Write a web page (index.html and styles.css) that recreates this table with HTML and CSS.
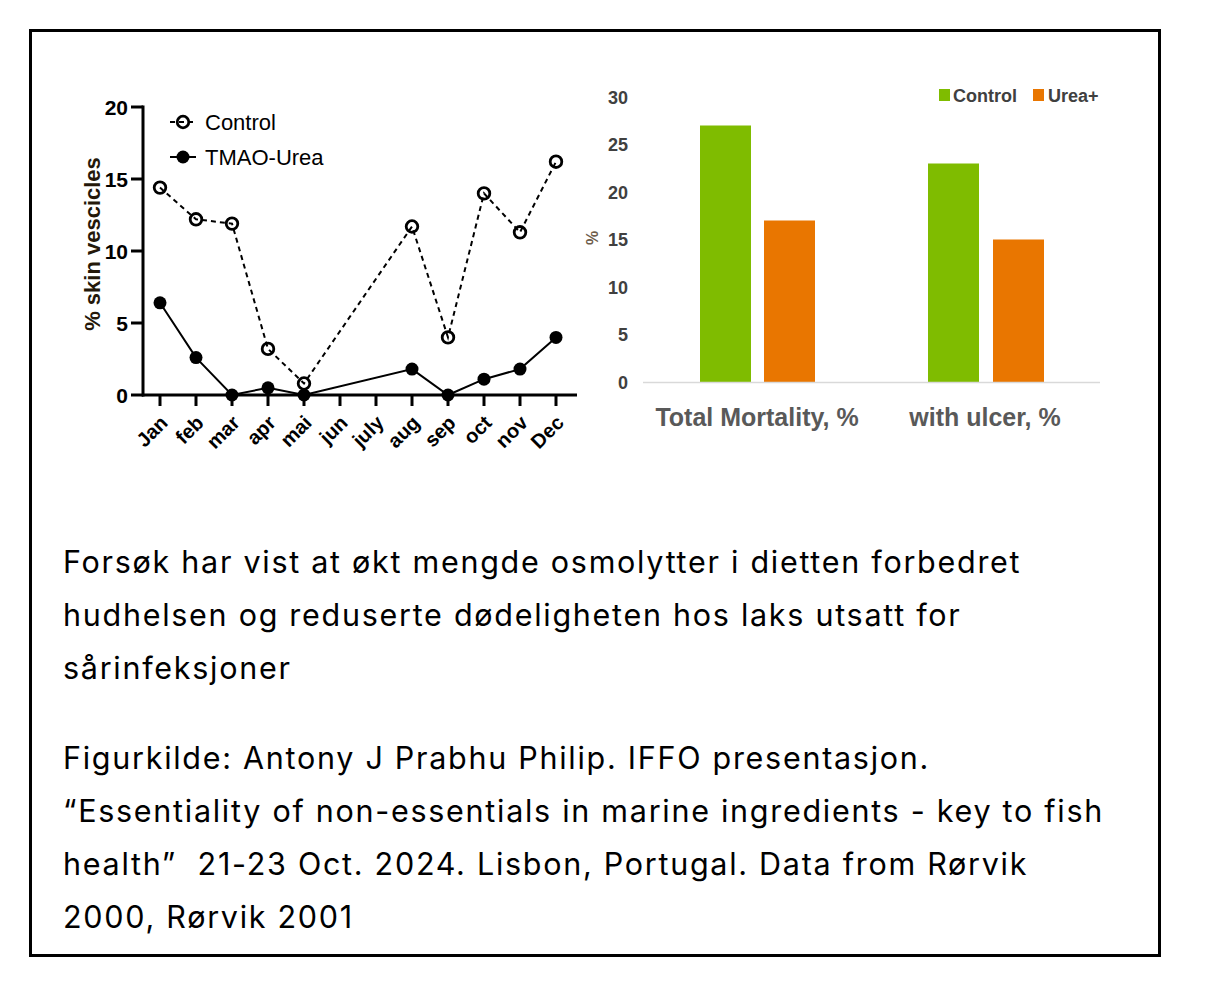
FILE: index.html
```html
<!DOCTYPE html>
<html lang="no">
<head>
<meta charset="utf-8">
<title>Osmolytter og hudhelse</title>
<link rel="stylesheet" href="styles.css">
</head>
<body>
<div class="frame">
  <div class="charts">
    <svg class="line-chart" width="522" height="390" viewBox="0 0 522 390">
      <text class="ytitle" transform="translate(37,174) rotate(-90)" text-anchor="middle">% skin vescicles</text>
      <g class="axis">
        <line x1="80" y1="35.5" x2="80" y2="326.5"/>
        <line x1="79" y1="325" x2="514" y2="325"/>
        <line x1="68" y1="37" x2="80" y2="37"/>
        <line x1="68" y1="109" x2="80" y2="109"/>
        <line x1="68" y1="181" x2="80" y2="181"/>
        <line x1="68" y1="253" x2="80" y2="253"/>
        <line x1="68" y1="325" x2="80" y2="325"/>
        <line x1="97" y1="325" x2="97" y2="336"/>
        <line x1="133" y1="325" x2="133" y2="336"/>
        <line x1="169" y1="325" x2="169" y2="336"/>
        <line x1="205" y1="325" x2="205" y2="336"/>
        <line x1="241" y1="325" x2="241" y2="336"/>
        <line x1="277" y1="325" x2="277" y2="336"/>
        <line x1="313" y1="325" x2="313" y2="336"/>
        <line x1="349" y1="325" x2="349" y2="336"/>
        <line x1="385" y1="325" x2="385" y2="336"/>
        <line x1="421" y1="325" x2="421" y2="336"/>
        <line x1="457" y1="325" x2="457" y2="336"/>
        <line x1="493" y1="325" x2="493" y2="336"/>
      </g>
      <g class="ylabels" text-anchor="end">
        <text x="65" y="45">20</text>
        <text x="65" y="117">15</text>
        <text x="65" y="189">10</text>
        <text x="65" y="261">5</text>
        <text x="65" y="333">0</text>
      </g>
      <g class="xlabels" text-anchor="end">
        <text transform="translate(106,354) rotate(-45)">Jan</text>
        <text transform="translate(142,354) rotate(-45)">feb</text>
        <text transform="translate(178,354) rotate(-45)">mar</text>
        <text transform="translate(214,354) rotate(-45)">apr</text>
        <text transform="translate(250,354) rotate(-45)">mai</text>
        <text transform="translate(286,354) rotate(-45)">jun</text>
        <text transform="translate(322,354) rotate(-45)">july</text>
        <text transform="translate(358,354) rotate(-45)">aug</text>
        <text transform="translate(394,354) rotate(-45)">sep</text>
        <text transform="translate(430,354) rotate(-45)">oct</text>
        <text transform="translate(466,354) rotate(-45)">nov</text>
        <text transform="translate(502,354) rotate(-45)">Dec</text>
      </g>
      <polyline class="dashed" points="97,117.6 133,149.3 169,153.6 205,278.9 241,313.5 349,156.5 385,267.4 421,123.4 457,162.3 493,91.7"/>
      <g class="open">
        <circle cx="97" cy="117.6" r="5.8"/>
        <circle cx="133" cy="149.3" r="5.8"/>
        <circle cx="169" cy="153.6" r="5.8"/>
        <circle cx="205" cy="278.9" r="5.8"/>
        <circle cx="241" cy="313.5" r="5.8"/>
        <circle cx="349" cy="156.5" r="5.8"/>
        <circle cx="385" cy="267.4" r="5.8"/>
        <circle cx="421" cy="123.4" r="5.8"/>
        <circle cx="457" cy="162.3" r="5.8"/>
        <circle cx="493" cy="91.7" r="5.8"/>
      </g>
      <polyline class="solid" points="97,232.8 133,287.6 169,325 205,317.8 241,325 349,299.1 385,325 421,309.2 457,299.1 493,267.4"/>
      <g class="filled">
        <circle cx="97" cy="232.8" r="6.5"/>
        <circle cx="133" cy="287.6" r="6.5"/>
        <circle cx="169" cy="325" r="6.5"/>
        <circle cx="205" cy="317.8" r="6.5"/>
        <circle cx="241" cy="325" r="6.5"/>
        <circle cx="349" cy="299.1" r="6.5"/>
        <circle cx="385" cy="325" r="6.5"/>
        <circle cx="421" cy="309.2" r="6.5"/>
        <circle cx="457" cy="299.1" r="6.5"/>
        <circle cx="493" cy="267.4" r="6.5"/>
      </g>
      <line class="dashed" x1="107" y1="52" x2="133" y2="52"/>
      <circle class="open-one" cx="120" cy="52" r="5.8"/>
      <text class="legend" x="142" y="60">Control</text>
      <line class="solid" x1="107" y1="87" x2="133" y2="87"/>
      <circle class="filled-one" cx="120" cy="87" r="6.5"/>
      <text class="legend" x="142" y="95">TMAO-Urea</text>
    </svg>

    <svg class="bar-chart" width="530" height="390" viewBox="0 0 530 390">
      <text class="pct" transform="translate(13,168) rotate(-90)" text-anchor="middle">%</text>
      <g class="bylabels" text-anchor="end">
        <text x="43" y="33.5">30</text>
        <text x="43" y="81">25</text>
        <text x="43" y="128.5">20</text>
        <text x="43" y="176">15</text>
        <text x="43" y="223.5">10</text>
        <text x="43" y="271">5</text>
        <text x="43" y="318.5">0</text>
      </g>
      <rect class="green" x="115" y="55.5" width="51" height="256.5"/>
      <rect class="orange" x="179" y="150.5" width="51" height="161.5"/>
      <rect class="green" x="343" y="93.5" width="51" height="218.5"/>
      <rect class="orange" x="408" y="169.5" width="51" height="142.5"/>
      <line class="base" x1="58" y1="312.5" x2="515" y2="312.5"/>
      <rect class="green" x="354" y="19" width="11" height="12"/>
      <text class="blegend" x="368" y="31.5">Control</text>
      <rect class="orange" x="448" y="19" width="11" height="12"/>
      <text class="blegend" x="463" y="31.5">Urea+</text>
      <text class="cat" x="172" y="356" text-anchor="middle">Total Mortality, %</text>
      <text class="cat" x="400" y="356" text-anchor="middle">with ulcer, %</text>
    </svg>
  </div>

  <p class="caption">Forsøk har vist at økt mengde osmolytter i dietten forbedret<br>hudhelsen og reduserte dødeligheten hos laks utsatt for<br>sårinfeksjoner</p>
  <p class="caption source">Figurkilde: Antony J Prabhu Philip. IFFO presentasjon.<br>“Essentiality of non-essentials in marine ingredients - key to fish<br>health”&nbsp; 21-23 Oct. 2024. Lisbon, Portugal. Data from Rørvik<br>2000, Rørvik 2001</p>
</div>
</body>
</html>
```

FILE: styles.css
```css
html, body {
  margin: 0;
  padding: 0;
  background: #ffffff;
}

body {
  font-family: "Liberation Sans", Arial, sans-serif;
}

.frame {
  box-sizing: border-box;
  margin: 29px 0 0 29px;
  width: 1132px;
  height: 928px;
  border: 3px solid #000000;
  padding: 38px 0 0 31px;
}

.charts {
  display: flex;
  align-items: flex-start;
  height: 390px;
}

.line-chart,
.bar-chart {
  display: block;
  flex: none;
}

.axis line {
  stroke: #000000;
  stroke-width: 3;
}

.ylabels text {
  font-family: "Liberation Sans", Arial, sans-serif;
  font-weight: bold;
  font-size: 21px;
  fill: #000000;
}

.xlabels text {
  font-family: "Liberation Sans", Arial, sans-serif;
  font-weight: bold;
  font-size: 20px;
  fill: #000000;
}

.ytitle {
  font-family: "Liberation Sans", Arial, sans-serif;
  font-weight: bold;
  font-size: 22px;
  fill: #24180a;
}

.legend {
  font-family: "Liberation Sans", Arial, sans-serif;
  font-size: 22px;
  fill: #000000;
}

.dashed {
  fill: none;
  stroke: #000000;
  stroke-width: 2;
  stroke-dasharray: 5 4;
}

.solid {
  fill: none;
  stroke: #000000;
  stroke-width: 2;
}

.open circle,
.open-one {
  fill: none;
  stroke: #000000;
  stroke-width: 2.8;
}

.filled circle,
.filled-one {
  fill: #000000;
  stroke: none;
}

.pct {
  font-family: "Liberation Sans", Arial, sans-serif;
  font-weight: bold;
  font-size: 16px;
  fill: #6e5d4c;
}

.bylabels text {
  font-family: "Liberation Sans", Arial, sans-serif;
  font-weight: bold;
  font-size: 18px;
  fill: #404040;
}

.green {
  fill: #7fbc00;
}

.orange {
  fill: #e97600;
}

.base {
  stroke: #d9d9d9;
  stroke-width: 1.5;
}

.blegend {
  font-family: "Liberation Sans", Arial, sans-serif;
  font-weight: bold;
  font-size: 18px;
  fill: #404040;
}

.cat {
  font-family: "Liberation Sans", Arial, sans-serif;
  font-weight: bold;
  font-size: 25px;
  fill: #595959;
}

.caption {
  margin: 0;
  font-family: Inter, "Liberation Sans", sans-serif;
  font-size: 30.5px;
  letter-spacing: 1.72px;
  line-height: 53px;
  color: #000000;
  white-space: nowrap;
}

.charts + .caption {
  margin-top: 75px;
}

.source {
  margin-top: 37px;
}
```
